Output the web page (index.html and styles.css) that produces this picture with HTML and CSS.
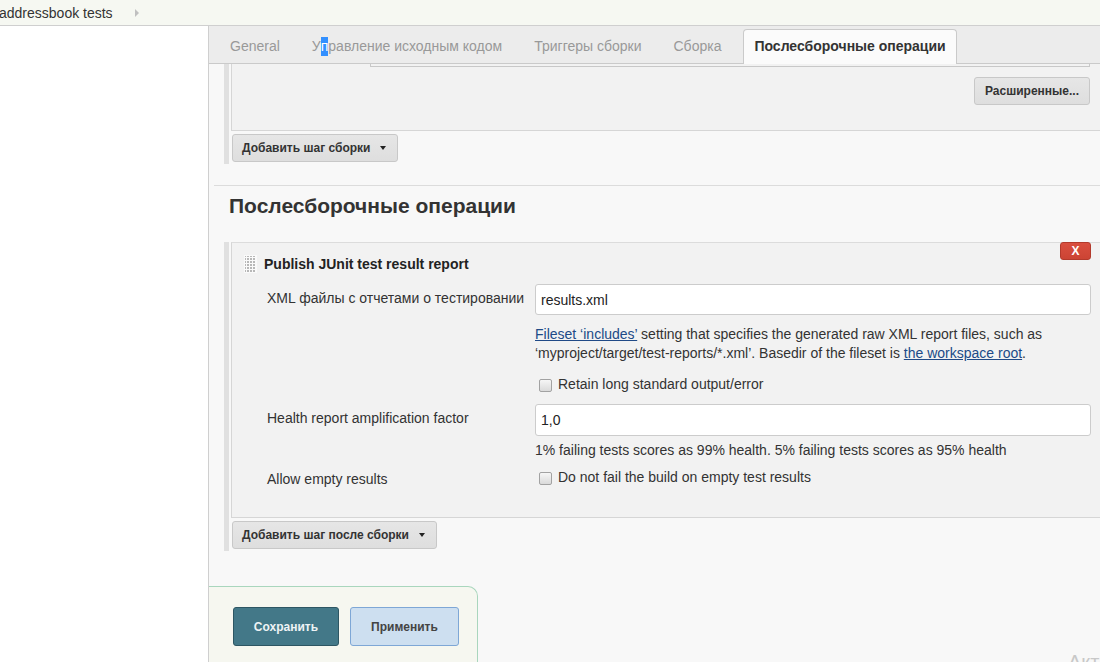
FILE: index.html
```html
<!DOCTYPE html>
<html lang="ru">
<head>
<meta charset="utf-8">
<title>addressbook tests</title>
<link rel="stylesheet" href="styles.css">
</head>
<body>
<header class="topbar">
  <span class="crumb">addressbook tests</span>
  <span class="crumb-arrow"></span>
</header>
<div class="layout">
  <aside class="sidebar"></aside>
  <main class="main">
    <nav class="tabs">
      <span class="tab">General</span>
      <span class="tab">У<span class="sel">п</span>равление исходным кодом</span>
      <span class="tab">Триггеры сборки</span>
      <span class="tab">Сборка</span>
      <span class="tab active">Послесборочные операции</span>
    </nav>

    <section class="section section-build">
      <div class="panel panel-top">
        <div class="stub"></div>
        <div class="adv-row"><button class="btn">Расширенные...</button></div>
      </div>
      <button class="btn btn-add">Добавить шаг сборки<span class="caret"></span></button>
    </section>

    <div class="divider"></div>
    <h2 class="section-title">Послесборочные операции</h2>

    <section class="section section-post">
      <div class="panel panel-junit">
        <button class="btn-close">X</button>
        <div class="panel-head">
          <svg class="handle" width="13" height="18" viewBox="0 0 13 18">
            <defs>
              <pattern id="dots" width="3" height="3" patternUnits="userSpaceOnUse">
                <rect width="2" height="2" fill="#b8b8b8"/>
              </pattern>
            </defs>
            <rect width="13" height="18" fill="#fafafa"/>
            <rect x="1" y="1" width="11" height="17" fill="url(#dots)"/>
          </svg>
          <span class="panel-title">Publish JUnit test result report</span>
        </div>

        <div class="row row-xml">
          <div class="label">XML файлы с отчетами о тестировании</div>
          <div class="value">
            <input class="text-input" type="text" value="results.xml">
            <div class="help help-xml"><a href="#">Fileset ‘includes’</a> setting that specifies the generated raw XML report files, such as<br>‘myproject/target/test-reports/*.xml’. Basedir of the fileset is <a href="#">the workspace root</a>.</div>
            <label class="check check-retain"><input type="checkbox" class="cb">Retain long standard output/error</label>
          </div>
        </div>

        <div class="row row-health">
          <div class="label">Health report amplification factor</div>
          <div class="value">
            <input class="text-input tall" type="text" value="1,0">
            <div class="help help-health">1% failing tests scores as 99% health. 5% failing tests scores as 95% health</div>
          </div>
        </div>

        <div class="row row-empty">
          <div class="label">Allow empty results</div>
          <div class="value">
            <label class="check"><input type="checkbox" class="cb">Do not fail the build on empty test results</label>
          </div>
        </div>
      </div>
      <button class="btn btn-add">Добавить шаг после сборки<span class="caret"></span></button>
    </section>

    <div class="bottom-bar">
      <button class="btn-save">Сохранить</button>
      <button class="btn-apply">Применить</button>
    </div>
  </main>
</div>
<div class="watermark">Активация Windows</div>
</body>
</html>
```

FILE: styles.css
```css
html, body {
  margin: 0;
  padding: 0;
  width: 1100px;
  height: 662px;
  overflow: hidden;
}

body {
  font-family: "Liberation Sans", Arial, sans-serif;
  font-size: 14px;
  color: #333;
  background: #fff;
  position: relative;
}

.topbar {
  height: 26px;
  box-sizing: border-box;
  background: #f6f8f2;
  border-bottom: 1px solid #cfcfcf;
  display: flex;
  align-items: center;
}

.crumb {
  margin-left: -1px;
  font-size: 14px;
  color: #333;
  line-height: 24px;
}

.crumb-arrow {
  margin-left: 22px;
  width: 0;
  height: 0;
  border-left: 4px solid #c0c0c0;
  border-top: 4px solid transparent;
  border-bottom: 4px solid transparent;
}

.layout {
  display: flex;
  height: 636px;
}

.sidebar {
  width: 208px;
  flex: none;
  background: #fff;
}

.main {
  flex: 1;
  background: #f8f8f8;
  border-left: 1px solid #cfcfcf;
  display: flex;
  flex-direction: column;
  min-width: 0;
}

/* Tabs */
.tabs {
  height: 38px;
  box-sizing: border-box;
  display: flex;
  align-items: flex-end;
  padding-left: 9px;
  background: #ececec;
  border-bottom: 1px solid #cacaca;
  flex: none;
}

.tab {
  height: 34px;
  line-height: 33px;
  padding: 0 11px;
  margin-right: 8px;
  margin-bottom: -1px;
  color: #999;
  font-size: 14px;
  border: 1px solid transparent;
  border-bottom: none;
  border-radius: 4px 4px 0 0;
  white-space: nowrap;
}

.tab.active {
  background: #fbfbfb;
  border-color: #cacaca;
  color: #333;
  font-weight: bold;
  padding: 0 10px;
  margin-left: 2px;
}

.sel {
  display: inline-block;
  line-height: 19px;
  background: #3390ff;
  color: #fff;
}

/* Sections */
.section {
  margin-left: 15px;
  border-left: 5px solid #e0e0e0;
  padding-left: 2px;
  padding-bottom: 2px;
  display: flex;
  flex-direction: column;
  align-items: flex-start;
  flex: none;
}

.panel {
  align-self: stretch;
  background: #f2f2f2;
  border-left: 1px solid #d6d6d6;
  border-bottom: 1px solid #d6d6d6;
}

.panel-top {
  padding-bottom: 25px;
}

.stub {
  margin-left: 138px;
  width: 718px;
  height: 2px;
  border: 1px solid #c8c8c8;
  border-top: none;
}

.adv-row {
  display: flex;
  justify-content: flex-end;
  padding-right: 10px;
  margin-top: 10px;
}

.btn {
  height: 28px;
  box-sizing: border-box;
  padding: 0 10px;
  background: linear-gradient(#e6e6e6, #dedede);
  border: 1px solid #c8c8c8;
  border-radius: 3px;
  font-family: "Liberation Sans", Arial, sans-serif;
  font-size: 12px;
  font-weight: bold;
  color: #333;
  display: inline-flex;
  align-items: center;
}

.btn-add {
  margin-top: 3px;
  margin-left: 1px;
  padding: 0 11px 0 9px;
}

.caret {
  margin-left: 10px;
  width: 0;
  height: 0;
  border-left: 3.5px solid transparent;
  border-right: 3.5px solid transparent;
  border-top: 4px solid #222;
}

.divider {
  margin-top: 21px;
  margin-left: 5px;
  height: 1px;
  background: #dcdcdc;
  flex: none;
}

.section-title {
  margin: 8px 0 24px 20px;
  font-size: 21px;
  line-height: 24px;
  font-weight: bold;
  color: #333;
}

.panel-junit {
  position: relative;
  border-top: 1px solid #dcdcdc;
  padding: 12px 0 29px 0;
}

.btn-close {
  position: absolute;
  top: -1px;
  right: 9px;
  width: 31px;
  height: 18px;
  padding: 0;
  border: 1px solid #b33a2c;
  border-radius: 3px;
  background: linear-gradient(#d94f3f, #cc4434);
  color: #fff;
  font-family: "Liberation Sans", Arial, sans-serif;
  font-size: 12px;
  font-weight: bold;
  line-height: 16px;
}

.panel-head {
  display: flex;
  align-items: center;
  height: 18px;
  margin-left: 12px;
}

.handle {
  display: block;
  flex: none;
}

.panel-title {
  margin-left: 7px;
  font-weight: bold;
  font-size: 14px;
  color: #222;
}

.row {
  display: grid;
  grid-template-columns: 268px 556px;
  margin-left: 35px;
}

.row-xml { margin-top: 11px; }
.row-health { margin-top: 10px; }
.row-empty { margin-top: 8px; }

.label {
  font-size: 14px;
  line-height: 17px;
  padding-top: 6px;
  color: #333;
}

.row-empty .label { padding-top: 3px; }

.value {
  display: flex;
  flex-direction: column;
}

.text-input {
  height: 31px;
  box-sizing: border-box;
  border: 1px solid #cccccc;
  border-radius: 3px;
  background: #fff;
  padding: 0 5px;
  font-family: "Liberation Sans", Arial, sans-serif;
  font-size: 14px;
  color: #222;
  outline: none;
}

.text-input.tall { height: 32px; }

.help {
  font-size: 14px;
  line-height: 19px;
  color: #333;
}

.help a {
  color: #204a87;
  text-decoration: underline;
}

.help-xml { margin-top: 10px; }
.help-health { margin-top: 5px; }

.check {
  display: block;
  font-size: 14px;
  line-height: 19px;
  color: #333;
  white-space: nowrap;
}

.check-retain { margin-top: 12px; }

.cb {
  appearance: none;
  -webkit-appearance: none;
  width: 13px;
  height: 13px;
  box-sizing: border-box;
  margin: 0 6px 0 4px;
  border: 1px solid #a2a2a2;
  border-radius: 2px;
  background: linear-gradient(#f6f6f6, #dadada);
  vertical-align: -3px;
}

/* Bottom bar */
.bottom-bar {
  margin-top: 35px;
  width: 269px;
  height: 90px;
  box-sizing: border-box;
  flex: none;
  background: #f6f7f0;
  border-top: 1px solid #a9d6bd;
  border-right: 1px solid #a9d6bd;
  border-radius: 0 10px 0 0;
  padding: 20px 0 0 24px;
  display: flex;
  align-items: flex-start;
  gap: 11px;
}

.btn-save,
.btn-apply {
  height: 39px;
  box-sizing: border-box;
  border-radius: 3px;
  font-family: "Liberation Sans", Arial, sans-serif;
  font-size: 12px;
  font-weight: bold;
}

.btn-save {
  width: 106px;
  background: #437888;
  border: 1px solid #2d5663;
  color: #eef3f5;
}

.btn-apply {
  width: 109px;
  background: #cddff0;
  border: 1px solid #7ea7d6;
  color: #444;
}

.watermark {
  position: absolute;
  left: 1068px;
  top: 650px;
  font-family: "Liberation Sans", Arial, sans-serif;
  font-size: 20px;
  line-height: 24px;
  color: #c8c8c8;
  white-space: nowrap;
}
```
